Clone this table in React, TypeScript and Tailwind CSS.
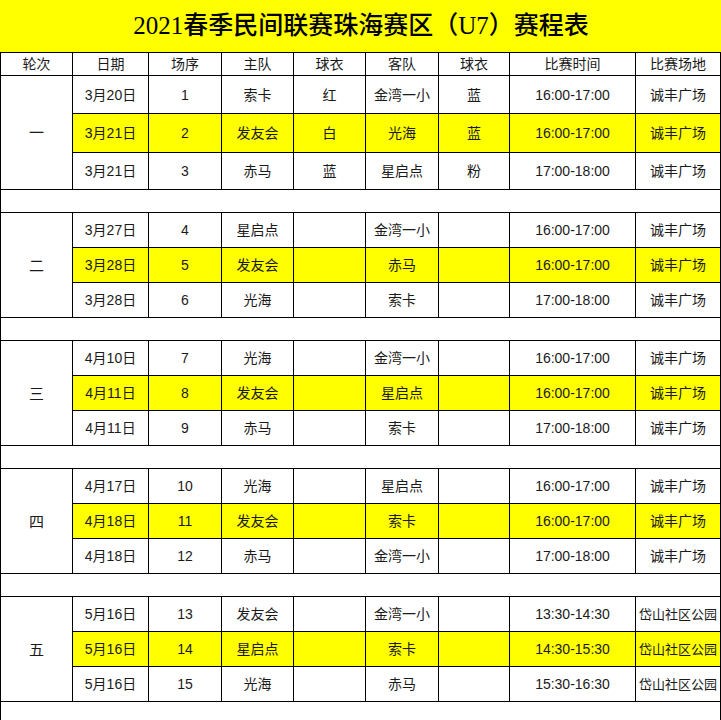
const groups = [
  {
    round: "一",
    tall: true,
    rows: [
      ["3月20日", "1", "索卡", "红", "金湾一小", "蓝", "16:00-17:00", "诚丰广场"],
      ["3月21日", "2", "发友会", "白", "光海", "蓝", "16:00-17:00", "诚丰广场"],
      ["3月21日", "3", "赤马", "蓝", "星启点", "粉", "17:00-18:00", "诚丰广场"],
    ],
  },
  {
    round: "二",
    rows: [
      ["3月27日", "4", "星启点", "", "金湾一小", "", "16:00-17:00", "诚丰广场"],
      ["3月28日", "5", "发友会", "", "赤马", "", "16:00-17:00", "诚丰广场"],
      ["3月28日", "6", "光海", "", "索卡", "", "17:00-18:00", "诚丰广场"],
    ],
  },
  {
    round: "三",
    rows: [
      ["4月10日", "7", "光海", "", "金湾一小", "", "16:00-17:00", "诚丰广场"],
      ["4月11日", "8", "发友会", "", "星启点", "", "16:00-17:00", "诚丰广场"],
      ["4月11日", "9", "赤马", "", "索卡", "", "17:00-18:00", "诚丰广场"],
    ],
  },
  {
    round: "四",
    rows: [
      ["4月17日", "10", "光海", "", "星启点", "", "16:00-17:00", "诚丰广场"],
      ["4月18日", "11", "发友会", "", "索卡", "", "16:00-17:00", "诚丰广场"],
      ["4月18日", "12", "赤马", "", "金湾一小", "", "17:00-18:00", "诚丰广场"],
    ],
  },
  {
    round: "五",
    rows: [
      ["5月16日", "13", "发友会", "", "金湾一小", "", "13:30-14:30", "岱山社区公园"],
      ["5月16日", "14", "星启点", "", "索卡", "", "14:30-15:30", "岱山社区公园"],
      ["5月16日", "15", "光海", "", "赤马", "", "15:30-16:30", "岱山社区公园"],
    ],
  },
];

const headers = ["轮次", "日期", "场序", "主队", "球衣", "客队", "球衣", "比赛时间", "比赛场地"];
const widths = [72, 76, 73, 72, 72, 73, 71, 126, 85];
const tallHeights = ["h-[38px]", "h-[39px]", "h-[37px]"];

export default function App() {
  return (
    <div
      className="w-[721px] h-[720px] bg-white text-[#1a1a1a] overflow-hidden"
      style={{ fontFamily: '"Liberation Sans", "Noto Sans CJK SC", sans-serif' }}
    >
      {/* Title */}
      <div className="h-[52px] bg-[#ffff00] flex items-center justify-center">
        <h1
          className="text-[25px] font-medium text-black pl-[1px]"
          style={{ fontFamily: '"Liberation Serif", "Noto Sans CJK SC", serif' }}
        >
          2021春季民间联赛珠海赛区（U7）赛程表
        </h1>
      </div>

      <table className="w-[720px] table-fixed border-collapse text-[14px] leading-none">
        <colgroup>
          {widths.map((w, i) => (
            <col key={i} style={{ width: w }} />
          ))}
        </colgroup>
        <thead>
          <tr className="h-[23px]">
            {headers.map((h, i) => (
              <th key={i} className="border border-black font-normal text-center p-0">
                {h}
              </th>
            ))}
          </tr>
        </thead>
        <tbody>
          {groups.map((g, gi) => (
            <>
              {g.rows.map((r, ri) => (
                <tr
                  key={`${gi}-${ri}`}
                  className={g.tall ? tallHeights[ri] : "h-[35px]"}
                >
                  {ri === 0 && (
                    <td rowSpan={3} className="border border-black text-center p-0 bg-white text-[15px]">
                      {g.round}
                    </td>
                  )}
                  {r.map((c, ci) => (
                    <td
                      key={ci}
                      className={`border border-black text-center p-0 whitespace-nowrap overflow-hidden ${
                        ri === 1 ? "bg-[#ffff00]" : "bg-white"
                      } ${ci === 7 && c.length > 4 ? "text-[13px]" : ""}`}
                    >
                      {c}
                    </td>
                  ))}
                </tr>
              ))}
              <tr key={`gap-${gi}`} className={gi === 4 ? "h-[19px]" : "h-[23px]"}>
                <td colSpan={9} className="border border-black p-0 bg-white"></td>
              </tr>
            </>
          ))}
        </tbody>
      </table>
    </div>
  );
}
